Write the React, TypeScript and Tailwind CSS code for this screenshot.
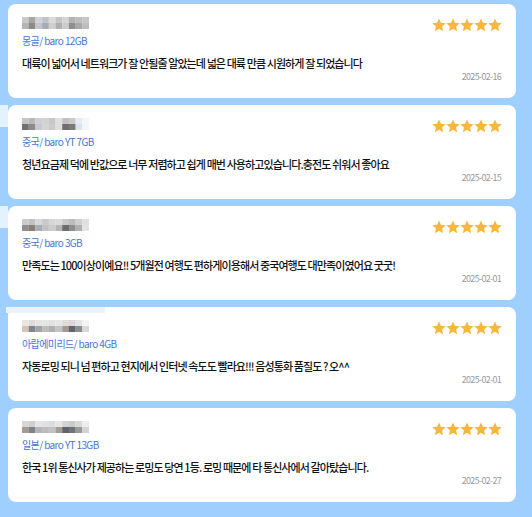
import React from "react";

type Review = {
  px: string[][];
  loc: string;
  text: string;
  date: string;
  haze?: "left" | "top";
};

const reviews: Review[] = [
  {
    px: [
      ["#c9c9c9", "#a9a5a2", "#cfd2d6", "#bfc3c9", "#dadada", "#c4c4c4", "#d6d6d6", "#b3b3b3", "#bdbdbd", "#c6c6c6"],
      ["#b4b4b4", "#8e8a88", "#c3c6cb", "#a8adb3", "#cfcfcf", "#b0b0b0", "#cccccc", "#8f8f8f", "#a9a9a9", "#bdbdbd"],
    ],
    loc: "몽골/ baro 12GB",
    text: "대륙이 넓어서 네트워크가 잘 안될줄 알았는데 넓은 대륙 만큼 시원하게 잘 되었습니다",
    date: "2025-02-16",
  },
  {
    px: [
      ["#c4c4c4", "#b9b9b9", "#cbd0d6", "#d2d2d2", "#c7c7c7", "#e0e0e0", "#c1c1c1", "#cacaca", "#e3edf7", "#f2f7fc"],
      ["#707070", "#8f8a86", "#c9c9c9", "#d4d4d4", "#cbcbcb", "#dedede", "#6e6e6e", "#7a7a7a", "#d9e4ef", "#f2f7fc"],
    ],
    loc: "중국/ baro YT 7GB",
    text: "청년요금제 덕에 반값으로 너무 저렴하고 쉽게 매번 사용하고있습니다.충전도 쉬워서 좋아요",
    date: "2025-02-15",
    haze: "left",
  },
  {
    px: [
      ["#cccccc", "#c2c2c2", "#d4d7db", "#c9c9c9", "#d6d6d6", "#dadada", "#c8c8c8", "#bcbcbc", "#d0d0d0", "#dfdfdf"],
      ["#8f8f8f", "#8a7f78", "#a9aeb4", "#c1c1c1", "#cccccc", "#b6b6b6", "#6d6d6d", "#8e8e8e", "#b0b0b0", "#e3e3e3"],
    ],
    loc: "중국/ baro 3GB",
    text: "만족도는 100이상이예요!! 5개월전 여행도 편하게이용해서 중국여행도 대만족이였어요 굿굿!",
    date: "2025-02-01",
    haze: "left",
  },
  {
    px: [
      ["#e9e4e0", "#dcdcdc", "#e4e4e4", "#e6e6e6", "#e2e2e2", "#e6e6e6", "#e0dcd8", "#d8d8d8", "#e4e4e4", "#f4f4f4"],
      ["#d9c4b4", "#7e858d", "#a4a4a4", "#bdbdbd", "#b0b0b0", "#c4c4c4", "#a39a92", "#5e6470", "#8c8c8c", "#d8d8d8"],
    ],
    loc: "아랍에미리드/ baro 4GB",
    text: "자동로밍 되니 넘 편하고 현지에서 인터넷 속도도 빨라요!!! 음성통화 품질도 ? 오^^",
    date: "2025-02-01",
    haze: "top",
  },
  {
    px: [
      ["#d7d7d7", "#cfcfcf", "#e4e4e4", "#e0e0e0", "#dddddd", "#e6e6e6", "#d2d2d2", "#cbcbcb", "#d9d9d9", "#ededed"],
      ["#a29a94", "#7d838b", "#b5b5b5", "#bcbcbc", "#c2c2c2", "#a49c95", "#5d6470", "#6f737a", "#9a9a9a", "#d2d2d2"],
    ],
    loc: "일본/ baro YT 13GB",
    text: "한국 1위 통신사가 제공하는 로밍도 당연 1등. 로밍 때문에 타 통신사에서 갈아탔습니다.",
    date: "2025-02-27",
  },
];

// pixelated (blurred) reviewer name
const Blur = ({ px }: { px: string[][] }) => (
  <svg width="67" height="12" viewBox="0 0 67 12" className="block">
    {px.map((row, r) =>
      row.map((c, i) => (
        <rect key={`${r}-${i}`} x={i * 6.7} y={r * 6} width="6.8" height="6" fill={c} />
      ))
    )}
  </svg>
);

const Star = () => (
  <svg width="14" height="14" viewBox="0 0 12 12" className="block">
    <path
      d="M6 .4L7.65 4.13 11.7 4.55 8.66 7.27 9.53 11.25 6 9.2 2.47 11.25 3.34 7.27 .3 4.55 4.35 4.13z"
      fill="#f6b73c"
    />
  </svg>
);

const Card = ({ r }: { r: Review }) => (
  <div className="relative h-[94px] rounded-[8px] bg-white pl-[14px] pr-[14px] pt-[13px]">
    {r.haze === "left" && (
      <div className="absolute -left-[8px] top-0 h-[22px] w-[8px] bg-[#e4f1fe]" />
    )}
    {r.haze === "top" && (
      <div className="absolute -left-[2px] top-0 h-[6px] w-[99px] bg-[#eaf4fe]" />
    )}
    <div className="flex items-start justify-between">
      <div>
        <Blur px={r.px} />
        <div className="mt-[5px] text-[10px] leading-[14px] tracking-[-0.6px] text-[#4775d6]">
          {r.loc}
        </div>
      </div>
      <div className="mt-[1px] flex">
        {[0, 1, 2, 3, 4].map((i) => (
          <Star key={i} />
        ))}
      </div>
    </div>
    <p className="mt-[7px] text-[11px] font-medium leading-[16px] tracking-[-0.9px] text-[#111]">
      {r.text}
    </p>
    <div className="pr-[1px] text-right text-[9px] leading-[12px] tracking-[-0.7px] text-[#999]">
      {r.date}
    </div>
  </div>
);

export default function App() {
  return (
    <div
      className="min-h-[517px] w-[532px] bg-[#9ecfff] pb-[15px] pl-[8px] pr-[16px] pt-[4px]"
      style={{ fontFamily: '"Noto Sans CJK KR", "Noto Sans", sans-serif' }}
    >
      <div className="flex flex-col gap-[7px]">
        {reviews.map((r, i) => (
          <Card key={i} r={r} />
        ))}
      </div>
    </div>
  );
}
